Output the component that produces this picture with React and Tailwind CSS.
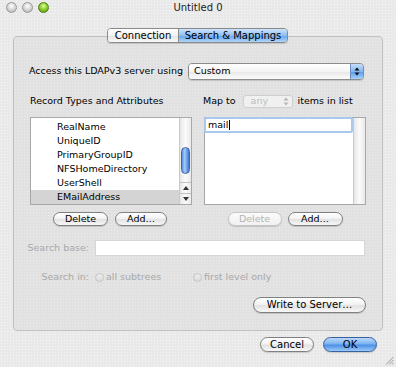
import React from "react";

function Light({ color }) {
  const look =
    color === "green"
      ? "bg-[radial-gradient(circle_at_50%_35%,#e4ffa8,#8fd12c_45%,#4f8f10)] border-[#4f7d1c]"
      : "bg-[radial-gradient(circle_at_50%_35%,#ffffff,#d6d6d6_50%,#a9a9a9)] border-[#9a9a9a]";
  return <div className={`w-[11px] h-[11px] rounded-full border ${look}`} />;
}

function AquaButton({ children, className = "", disabled, primary }) {
  const look = primary
    ? "border-[#35619e] bg-[linear-gradient(#bcd8fb,#7cb3f0_45%,#4b8fe6_55%,#9cc9f8)] text-black"
    : disabled
    ? "border-[#c6c6c6] bg-[linear-gradient(#fbfbfb,#f1f1f1)] text-[#b4b4b4]"
    : "border-[#808080] bg-[linear-gradient(#ffffff,#f3f3f3_45%,#e2e2e2_55%,#f8f8f8)] text-black";
  return (
    <div
      className={`flex items-center justify-center rounded-full border text-[9.5px] leading-none whitespace-nowrap shadow-[0_1px_1px_rgba(0,0,0,0.15)] ${look} ${className}`}
    >
      {children}
    </div>
  );
}

function Arrows({ dim }) {
  const c = dim ? "#b6b6b6" : "#111";
  return (
    <svg width="6" height="9" viewBox="0 0 6 9">
      <path d="M3 0.5L5.5 3.5H0.5Z" fill={c} />
      <path d="M3 8.5L5.5 5.5H0.5Z" fill={c} />
    </svg>
  );
}

function Radio({ label }) {
  return (
    <div className="flex items-center gap-[2px] whitespace-nowrap">
      <div className="w-[9px] h-[9px] rounded-full border border-[#c4c4c4] bg-[linear-gradient(#ededed,#dcdcdc)]" />
      <span>{label}</span>
    </div>
  );
}

function ScrollTrack({ children }) {
  return (
    <div className="w-[12px] h-full flex flex-col border-l border-[#c9c9c9] bg-[linear-gradient(90deg,#e6e6e6,#fbfbfb_50%,#e9e9e9)]">
      {children}
    </div>
  );
}

export default function App() {
  const records = ["RealName", "UniqueID", "PrimaryGroupID", "NFSHomeDirectory", "UserShell", "EMailAddress"];

  return (
    <div className="relative w-[396px] h-[367px] overflow-hidden bg-[#e9e9e9] bg-[radial-gradient(#f6f6f6_0.6px,transparent_0.7px)] bg-[size:3px_3px] font-['DejaVu_Sans',sans-serif] text-[9.5px] text-black">
      {/* Title bar */}
      <div className="grid grid-cols-[60px_1fr_60px] items-center h-[15px]">
        <div className="flex items-center gap-[5px] pl-[6px]">
          <Light />
          <Light />
          <Light color="green" />
        </div>
        <div className="text-center text-[10px] text-[#222]">Untitled 0</div>
        <div />
      </div>

      {/* Tabs */}
      <div className="relative z-10 mt-[13px] flex justify-center h-[15px] pr-[1px]">
        <div className="flex h-full rounded-[4px] border border-[#8a8a8a] overflow-hidden shadow-[0_1px_1px_rgba(0,0,0,0.15)]">
          <div className="w-[71px] flex items-center justify-center bg-[linear-gradient(#ffffff,#f2f2f2_50%,#e4e4e4_55%,#fafafa)] border-r border-[#8a8a8a] text-[10px]">
            Connection
          </div>
          <div className="w-[108px] flex items-center justify-center bg-[linear-gradient(#cfe3fb,#8fbff3_50%,#6aa8ee_55%,#b0d5fa)] text-[10px]">
            Search &amp; Mappings
          </div>
        </div>
      </div>

      {/* Group box */}
      <div className="mx-[13px] -mt-[7px] h-[295px] rounded-[4px] border border-[#c0c0c0] bg-[#e1e1e1] bg-[radial-gradient(#ececec_0.6px,transparent_0.7px)] bg-[size:3px_3px] pl-[15px] pr-[16px]">
        {/* Access row */}
        <div className="mt-[26px] flex items-center h-[17px]">
          <span className="whitespace-nowrap">Access this LDAPv3 server using</span>
          <div className="ml-auto mr-[2px] w-[176px] h-full flex rounded-[4px] border border-[#8c8c8c] overflow-hidden shadow-[0_1px_1px_rgba(0,0,0,0.15)]">
            <div className="flex-1 flex items-center pl-[5px] bg-[linear-gradient(#ffffff,#f4f4f4_50%,#e9e9e9_55%,#fbfbfb)]">Custom</div>
            <div className="w-[13px] flex items-center justify-center border-l border-[#6d8fbf] bg-[linear-gradient(#c8defa,#83b6f1_50%,#5e9eec_55%,#a9d0fa)]">
              <Arrows />
            </div>
          </div>
        </div>

        {/* Two columns */}
        <div className="ml-[1px] mt-[14px] flex gap-[12px]">
          {/* Left */}
          <div className="w-[162px] flex flex-col">
            <div className="h-[14px] flex items-center whitespace-nowrap">Record Types and Attributes</div>
            <div className="mt-[9px] h-[88px] flex border border-[#a8a8a8] bg-white">
              <div className="flex-1 pt-[2px] overflow-hidden">
                {records.map((r) => (
                  <div
                    key={r}
                    className={`h-[14px] flex items-center pl-[26px] ${r === "EMailAddress" ? "bg-[#d4d4d4]" : ""}`}
                  >
                    {r}
                  </div>
                ))}
              </div>
              <ScrollTrack>
                <div className="h-[29px]" />
                <div className="mx-auto w-[9px] h-[27px] rounded-full border border-[#3d67a8] bg-[linear-gradient(90deg,#5a8fdc,#a9cbf7_40%,#7eaef0_60%,#3e77cf)]" />
                <div className="flex-1" />
                <div className="h-[11px] flex items-center justify-center border-t border-[#c4c4c4]">
                  <svg width="6" height="4" viewBox="0 0 6 4"><path d="M3 0L6 4H0Z" fill="#333" /></svg>
                </div>
                <div className="h-[11px] flex items-center justify-center border-t border-[#c4c4c4]">
                  <svg width="6" height="4" viewBox="0 0 6 4"><path d="M3 4L6 0H0Z" fill="#333" /></svg>
                </div>
              </ScrollTrack>
            </div>
            <div className="mt-[7px] flex justify-center gap-[7px] pr-[2px]">
              <AquaButton className="w-[55px] h-[14px]">Delete</AquaButton>
              <AquaButton className="w-[52px] h-[14px]">Add…</AquaButton>
            </div>
          </div>

          {/* Right */}
          <div className="w-[162px] flex flex-col">
            <div className="h-[14px] flex items-center -ml-[1px] whitespace-nowrap">
              <span>Map to</span>
              <div className="ml-[7px] w-[50px] h-[13px] flex items-center rounded-[3px] border border-[#cfcfcf] bg-[#f0f0f0] text-[#bcbcbc]">
                <span className="flex-1 pl-[7px]">any</span>
                <div className="w-[11px] h-full flex items-center justify-center">
                  <Arrows dim />
                </div>
              </div>
              <span className="ml-[5px]">items in list</span>
            </div>
            <div className="mt-[9px] h-[88px] flex border border-[#a8a8a8] bg-white">
              <div className="flex-1">
                <div className="h-[16px] flex items-center pl-[2px] border-2 border-[#a9c8ee] rounded-[2px] -ml-[1px] -mt-[1px] bg-white">
                  mail
                  <span className="ml-[1px] w-px h-[10px] bg-black" />
                </div>
              </div>
              <ScrollTrack />
            </div>
            <div className="mt-[7px] flex justify-center gap-[6px]">
              <AquaButton disabled className="w-[54px] h-[14px]">Delete</AquaButton>
              <AquaButton className="w-[55px] h-[14px]">Add…</AquaButton>
            </div>
          </div>
        </div>

        {/* Search base */}
        <div className="mt-[14px] h-[16px] flex items-center text-[#a9a9a9]">
          <div className="w-[60px] flex justify-end whitespace-nowrap">Search base:</div>
          <div className="ml-[6px] w-[270px] h-[16px] bg-white border border-[#d6d6d6]" />
        </div>

        {/* Search in */}
        <div className="mt-[14px] h-[14px] flex items-center text-[#a9a9a9]">
          <div className="w-[60px] flex justify-end whitespace-nowrap">Search in:</div>
          <div className="ml-[6px] w-[98px]">
            <Radio label="all subtrees" />
          </div>
          <Radio label="first level only" />
        </div>

        {/* Write to server */}
        <div className="mt-[13px] flex justify-end">
          <AquaButton className="w-[113px] h-[16px] text-[10px]">Write to Server…</AquaButton>
        </div>
      </div>

      {/* Bottom buttons */}
      <div className="mt-[6px] flex justify-end gap-[9px] pr-[19px]">
        <AquaButton className="w-[54px] h-[15px] text-[10px]">Cancel</AquaButton>
        <AquaButton primary className="w-[54px] h-[15px] text-[10px]">OK</AquaButton>
      </div>

      {/* Resize grip */}
      <svg className="absolute right-[2px] bottom-[2px]" width="9" height="9" viewBox="0 0 9 9">
        <path d="M8.5 1L1 8.5M8.5 4L4 8.5M8.5 7L7 8.5" stroke="#9a9a9a" strokeWidth="1" />
      </svg>
    </div>
  );
}
